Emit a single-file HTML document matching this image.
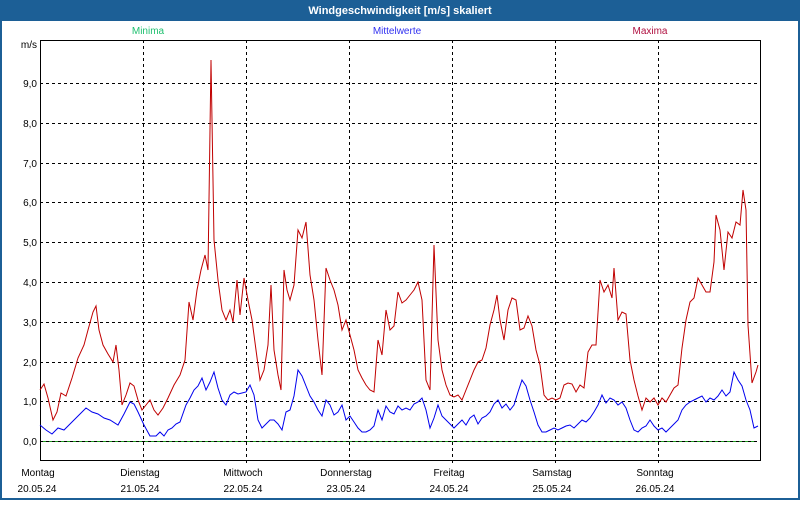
<!DOCTYPE html><html><head><style>
body{margin:0;width:800px;height:500px;overflow:hidden;background:#fff;font-family:"Liberation Sans",sans-serif}
</style></head><body>
<svg width="800" height="500" xmlns="http://www.w3.org/2000/svg" font-family="Liberation Sans, sans-serif" font-size="10">
<rect x="0" y="0" width="800" height="500" fill="#1c5f96"/>
<rect x="2" y="21" width="796" height="477" fill="#fff"/>
<text x="400" y="14" fill="#fff" font-weight="bold" font-size="11" text-anchor="middle">Windgeschwindigkeit [m/s] skaliert</text>
<text x="148" y="34" fill="#20c070" text-anchor="middle">Minima</text>
<text x="397" y="34" fill="#3030f0" text-anchor="middle">Mittelwerte</text>
<text x="650" y="34" fill="#b01040" text-anchor="middle">Maxima</text>
<g stroke="#000" stroke-dasharray="3,3" stroke-width="1">
<line x1="143.5" y1="40" x2="143.5" y2="464"/><line x1="246.5" y1="40" x2="246.5" y2="464"/><line x1="349.5" y1="40" x2="349.5" y2="464"/><line x1="452.5" y1="40" x2="452.5" y2="464"/><line x1="555.5" y1="40" x2="555.5" y2="464"/><line x1="658.5" y1="40" x2="658.5" y2="464"/>
<line x1="40" y1="83.5" x2="760" y2="83.5"/><line x1="40" y1="123.5" x2="760" y2="123.5"/><line x1="40" y1="163.5" x2="760" y2="163.5"/><line x1="40" y1="202.5" x2="760" y2="202.5"/><line x1="40" y1="242.5" x2="760" y2="242.5"/><line x1="40" y1="282.5" x2="760" y2="282.5"/><line x1="40" y1="322.5" x2="760" y2="322.5"/><line x1="40" y1="362.5" x2="760" y2="362.5"/><line x1="40" y1="401.5" x2="760" y2="401.5"/>
</g>
<line x1="40" y1="441.5" x2="757" y2="441.5" stroke="#20a020"/>
<line x1="40" y1="441.5" x2="757" y2="441.5" stroke="#000" stroke-dasharray="3,3"/>
<rect x="40.5" y="40.5" width="720" height="420" fill="none" stroke="#000"/>
<g text-anchor="end" fill="#000">
<text x="37" y="48">m/s</text><text x="37" y="87">9,0</text><text x="37" y="127">8,0</text><text x="37" y="167">7,0</text><text x="37" y="206">6,0</text><text x="37" y="246">5,0</text><text x="37" y="286">4,0</text><text x="37" y="326">3,0</text><text x="37" y="366">2,0</text><text x="37" y="405">1,0</text><text x="37" y="445">0,0</text>
</g>
<g text-anchor="middle" fill="#000">
<text x="38" y="476">Montag</text><text x="37" y="492">20.05.24</text>
<text x="140" y="476">Dienstag</text><text x="140" y="492">21.05.24</text>
<text x="243" y="476">Mittwoch</text><text x="243" y="492">22.05.24</text>
<text x="346" y="476">Donnerstag</text><text x="346" y="492">23.05.24</text>
<text x="449" y="476">Freitag</text><text x="449" y="492">24.05.24</text>
<text x="552" y="476">Samstag</text><text x="552" y="492">25.05.24</text>
<text x="655" y="476">Sonntag</text><text x="655" y="492">26.05.24</text>
</g>
<polyline fill="none" stroke="#c00000" stroke-width="1" points="40,390 44,384 48,398 53,420 57,412 61,393 66,396 72,378 78,358 84,345 88,330 93,312 96,306 99,330 103,345 108,354 113,362 116,345 119,370 122,405 126,395 130,383 134,386 138,400 142,410 146,405 150,400 154,410 158,415 163,408 168,398 174,385 180,375 185,360 189,302 193,320 197,290 201,270 205,255 208,270 211,60 214,240 218,280 222,310 226,320 230,310 233,322 237,280 240,315 244,278 248,300 252,320 256,350 260,380 264,370 268,345 271,285 274,350 278,375 281,390 284,270 287,290 290,300 294,285 298,230 302,238 306,222 310,275 314,300 318,340 322,375 326,268 330,280 334,290 338,305 342,330 346,320 350,335 354,350 358,370 362,378 366,385 370,390 374,392 378,340 382,355 386,310 390,330 394,326 398,292 402,303 406,300 410,295 414,290 418,282 422,300 426,380 430,390 434,245 438,340 442,370 446,385 450,395 454,397 458,395 462,400 466,390 470,380 474,370 478,362 482,360 486,348 490,325 494,310 497,295 500,320 504,340 508,310 512,298 516,300 520,330 524,328 528,316 532,326 536,350 540,365 544,395 548,400 552,398 556,400 560,398 564,385 568,383 572,384 576,392 580,385 584,388 588,352 592,345 596,345 600,280 604,292 608,285 612,298 614,268 618,320 622,312 626,314 630,360 634,380 638,396 642,410 646,398 650,402 654,398 658,405 662,398 666,402 670,395 674,388 678,385 682,348 686,320 690,302 694,298 698,278 702,285 706,292 710,292 714,262 716,215 720,230 724,270 728,232 732,238 736,222 740,225 743,190 746,210 748,325 752,383 756,372 758,365"/>
<polyline fill="none" stroke="#0000ee" stroke-width="1" points="40,425 46,430 52,434 58,428 64,430 70,424 78,416 86,408 92,412 98,414 104,418 110,420 118,425 124,414 130,402 134,404 138,412 144,425 150,436 156,436 160,432 164,436 168,430 172,428 176,424 180,422 186,405 190,398 194,390 198,386 202,378 206,390 210,382 214,372 218,388 222,400 226,405 230,395 234,392 238,394 242,393 246,392 250,385 254,395 258,420 262,428 266,424 270,420 274,420 278,424 282,430 286,412 290,410 294,396 298,370 302,376 306,386 310,396 314,402 318,410 322,416 326,400 330,405 334,415 338,412 342,405 346,420 350,416 354,422 358,428 362,432 366,432 370,430 374,426 378,410 382,420 386,406 390,412 394,414 398,406 402,410 406,408 410,410 414,404 418,402 422,398 426,410 430,428 434,418 438,405 442,416 446,420 450,424 454,428 458,424 462,420 466,425 470,418 474,415 478,424 482,418 486,416 490,412 494,404 498,400 502,408 506,404 510,410 514,405 518,392 522,380 526,386 530,400 534,412 538,425 542,432 546,432 550,430 554,428 558,430 562,428 566,426 570,425 574,428 578,424 582,420 586,422 590,418 594,412 598,405 602,395 606,403 610,398 614,400 618,405 622,402 626,408 630,420 634,430 638,432 642,428 646,426 650,420 654,426 658,430 662,428 666,432 670,428 674,424 678,420 682,410 686,405 690,402 694,400 698,398 702,396 706,402 710,398 714,400 718,396 722,390 726,396 730,392 734,372 738,380 742,386 746,400 750,410 754,428 758,426"/>
</svg>
</body></html>
